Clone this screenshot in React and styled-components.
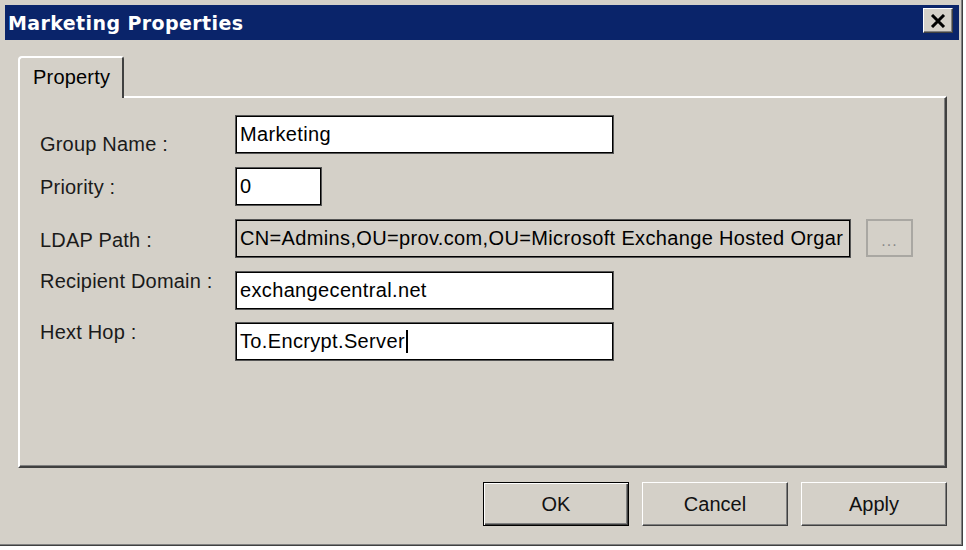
import styled, { createGlobalStyle } from "styled-components";

const GlobalStyle = createGlobalStyle`
    body {
        margin: 0;
        background: #ffffff;
        font-family: "Liberation Sans", Arial, sans-serif;
    }
`

const rows = [
    { label: "Group Name :", value: "Marketing", width: 379, drop: 23 },
    { label: "Priority :", value: "0", width: 87, drop: 14 },
    { label: "LDAP Path :", value: "CN=Admins,OU=prov.com,OU=Microsoft Exchange Hosted Orgar", width: 616, drop: 15, disabled: true, browse: true },
    { label: "Recipient Domain :", value: "exchangecentral.net", width: 379, drop: 3 },
    { label: "Hext Hop :", value: "To.Encrypt.Server", width: 379, drop: 1, caret: true },
];

const App = () => {
    return (
        <>
            <GlobalStyle />
            <Window>
                <TitleBar>
                    <Title>Marketing Properties</Title>
                    <CloseButton aria-label="Close">
                        <svg width="16" height="14" viewBox="0 0 16 14">
                            <path d="M2 1 L14 13 M14 1 L2 13" stroke="#000" strokeWidth="3" />
                        </svg>
                    </CloseButton>
                </TitleBar>
                <Content>
                    <TabStrip>
                        <Tab>Property</Tab>
                    </TabStrip>
                    <Panel>
                        <Form>
                            {rows.map((row) => (
                                <Row key={row.label}>
                                    <Label $drop={row.drop}>{row.label}</Label>
                                    <Field $width={row.width} $disabled={row.disabled}>
                                        {row.value}
                                        {row.caret && <Caret />}
                                    </Field>
                                    {row.browse && <BrowseButton>...</BrowseButton>}
                                </Row>
                            ))}
                        </Form>
                    </Panel>
                    <ButtonBar>
                        <Button $default>OK</Button>
                        <Button>Cancel</Button>
                        <Button>Apply</Button>
                    </ButtonBar>
                </Content>
            </Window>
        </>
    )
}

const Window = styled.div`
    box-sizing: border-box;
    width: 963px;
    height: 546px;
    background: #d4d0c8;
    border-right: 1px solid #404040;
    border-bottom: 1px solid #404040;
    box-shadow: inset -1px -1px 0 #808080;
    padding: 5px 3px 0 5px;
    display: flex;
    flex-direction: column;
`

const TitleBar = styled.div`
    height: 35px;
    background: #0a246a;
    display: flex;
    align-items: center;
    justify-content: space-between;
    padding: 0 6px 0 3px;
`

const Title = styled.div`
    color: #ffffff;
    font-family: "DejaVu Sans", Tahoma, sans-serif;
    font-weight: bold;
    font-size: 19px;
    letter-spacing: 0.4px;
`

const CloseButton = styled.div`
    box-sizing: border-box;
    width: 30px;
    height: 25px;
    margin-top: -4px;
    background: #d4d0c8;
    border: 1px solid;
    border-color: #ffffff #404040 #404040 #ffffff;
    box-shadow: inset -1px -1px 0 #808080;
    display: flex;
    align-items: center;
    justify-content: center;
`

const Content = styled.div`
    flex: 1;
    display: flex;
    flex-direction: column;
    padding: 16px 12px 0 13px;
`

const TabStrip = styled.div`
    display: flex;
    height: 40px;
    position: relative;
    z-index: 1;
`

const Tab = styled.div`
    box-sizing: border-box;
    width: 106px;
    height: 42px;
    background: #d4d0c8;
    border-top: 2px solid #ffffff;
    border-left: 2px solid #ffffff;
    border-right: 2px solid #404040;
    border-top-left-radius: 4px;
    border-top-right-radius: 3px;
    font-size: 20px;
    letter-spacing: 0.2px;
    color: #000;
    padding: 8px 0 0 13px;
`

const Panel = styled.div`
    box-sizing: border-box;
    height: 372px;
    border-top: 2px solid #ffffff;
    border-left: 2px solid #ffffff;
    border-right: 2px solid #404040;
    border-bottom: 2px solid #404040;
    box-shadow: inset -1px -1px 0 #808080;
    padding: 17px 0 0 20px;
`

const Form = styled.div`
    display: grid;
    grid-template-rows: 39px 39px 39px 38px 38px;
    row-gap: 13px;
`

const Row = styled.div`
    display: flex;
    align-items: flex-start;
`

const Label = styled.div`
    width: 195px;
    flex-shrink: 0;
    font-size: 20px;
    line-height: 20px;
    letter-spacing: 0.2px;
    color: #1a1a1a;
    padding-top: ${(p) => p.$drop - 4}px;
`

const Field = styled.div`
    box-sizing: border-box;
    width: ${(p) => p.$width}px;
    height: 39px;
    background: ${(p) => (p.$disabled ? "#d4d0c8" : "#ffffff")};
    border: 1px solid #555;
    box-shadow: inset 0 0 0 1px #000;
    padding: 0 3px 0 4px;
    display: flex;
    align-items: center;
    font-size: 20px;
    letter-spacing: 0.35px;
    color: #000;
    white-space: nowrap;
    overflow: hidden;
`

const Caret = styled.span`
    display: inline-block;
    width: 2px;
    height: 23px;
    background: #000;
    margin-left: 1px;
`

const BrowseButton = styled.div`
    box-sizing: border-box;
    width: 47px;
    height: 38px;
    margin-left: 15px;
    border: 2px solid #a9a7a2;
    color: #8a8a8a;
    font-size: 16px;
    letter-spacing: 1px;
    display: flex;
    align-items: center;
    justify-content: center;
    padding-top: 6px;
`

const ButtonBar = styled.div`
    display: flex;
    justify-content: flex-end;
    gap: 13px;
    padding-top: 14px;
`

const Button = styled.div`
    box-sizing: border-box;
    width: 146px;
    height: 44px;
    background: #d4d0c8;
    border: 1px solid;
    border-color: ${(p) => (p.$default ? "#000" : "#ffffff #404040 #404040 #ffffff")};
    box-shadow: ${(p) =>
        p.$default
            ? "inset 1px 1px 0 #ffffff, inset -1px -1px 0 #404040, inset -2px -2px 0 #808080"
            : "inset -1px -1px 0 #808080"};
    display: flex;
    align-items: center;
    justify-content: center;
    font-size: 20px;
    color: #111;
`

export default App;
